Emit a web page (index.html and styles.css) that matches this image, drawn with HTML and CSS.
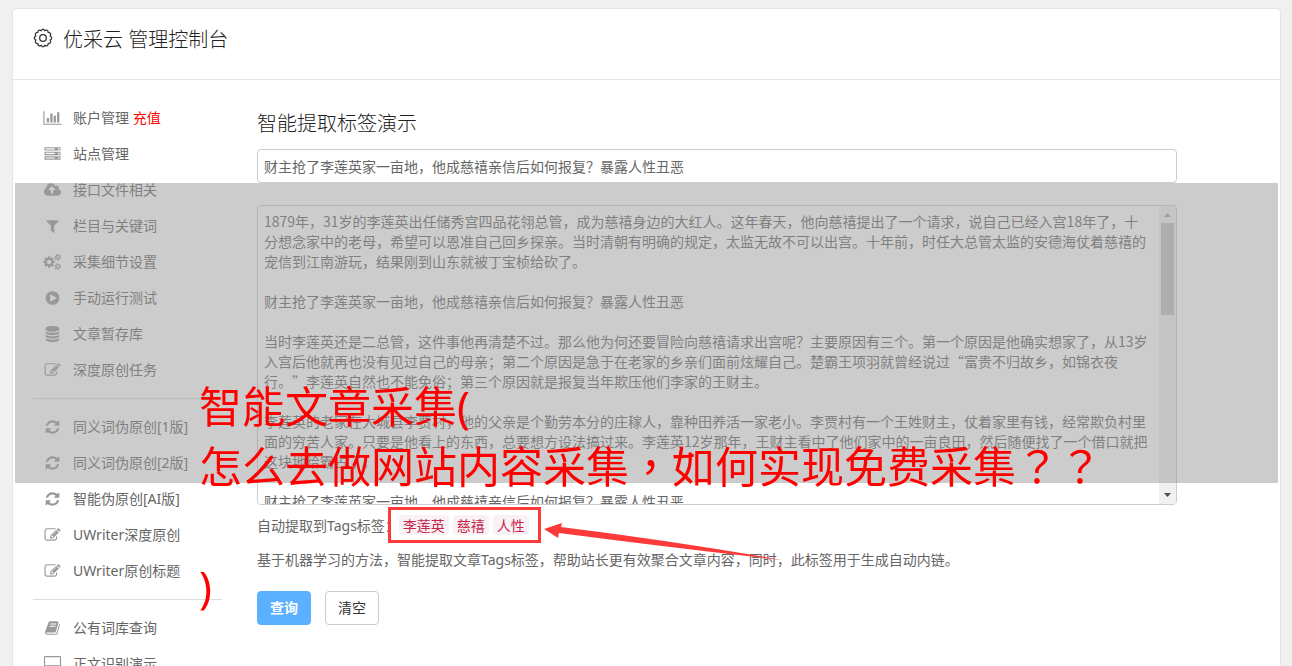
FILE: index.html
```html
<!DOCTYPE html>
<html lang="zh-CN">
<head>
    <meta charset="UTF-8">
    <meta name="viewport" content="width=device-width, initial-scale=1.0">
    <title>优采云 管理控制台</title>
    <link rel="stylesheet" href="styles.css">
</head>
<body>
    <svg class="symbols" aria-hidden="true">
        <symbol id="i-chart" viewBox="0 0 2048 1792"><path d="M640 896v512h-256v-512h256zm384-512v1024h-256v-1024h256zm1024 1152v128h-2048v-1536h128v1408h1920zm-640-896v768h-256v-768h256zm384-384v1152h-256v-1152h256z"/></symbol>
        <symbol id="i-server" viewBox="0 0 1792 1792"><path d="M128 1408h1024v-128h-1024v128zm0-512h1024v-128h-1024v128zm1568 448q0-40-28-68t-68-28-68 28-28 68 28 68 68 28 68-28 28-68zm-1568-960h1024v-128h-1024v128zm1568 448q0-40-28-68t-68-28-68 28-28 68 28 68 68 28 68-28 28-68zm0-512q0-40-28-68t-68-28-68 28-28 68 28 68 68 28 68-28 28-68zm96 832v384h-1792v-384h1792zm0-512v384h-1792v-384h1792zm0-512v384h-1792v-384h1792z"/></symbol>
        <symbol id="i-cloud" viewBox="0 0 1920 1792"><path d="M1280 864q0-14-9-23l-352-352q-9-9-23-9t-23 9l-351 351q-10 12-10 24 0 14 9 23t23 9h224v352q0 13 9.500 22.500t22.500 9.500h192q13 0 22.500-9.500t9.500-22.500v-352h224q13 0 22.500-9.500t9.500-22.500zm640 288q0 159-112.500 271.500t-271.500 112.500h-1088q-185 0-316.500-131.500t-131.500-316.500q0-130 70-240t188-165q-2-30-2-43 0-212 150-362t362-150q156 0 285.500 87t188.500 231q71-62 166-62 106 0 181 75t75 181q0 76-41 138 130 31 213.500 135.500t83.500 238.500z"/></symbol>
        <symbol id="i-filter" viewBox="0 0 1792 1792"><path d="M1595 295q17 41-14 70l-493 493v742q0 42-39 59-13 5-25 5-27 0-45-19l-256-256q-19-19-19-45v-486l-493-493q-31-29-14-70 17-39 59-39h1280q42 0 59 39z"/></symbol>
        <symbol id="i-cogs" viewBox="0 0 1920 1792">
            <path d="M832 896q0-106-75-181t-181-75-181 75-75 181 75 181 181 75 181-75 75-181zm384-91v185q0 10-7 19.500t-16 10.500l-155 24q-11 35-32 76 34 48 90 115 7 11 7 20 0 12-7 19-23 30-82.500 89.500t-78.500 59.500q-11 0-21-7l-115-90q-37 19-77 31-11 108-23 155-7 24-30 24h-186q-11 0-20-7.500t-10-17.500l-23-153q-34-10-75-31l-118 89q-7 7-20 7-11 0-21-8-144-133-144-160 0-9 7-19 10-14 41-53t47-61q-23-44-35-82l-152-24q-10-1-17-9.500t-7-19.500v-185q0-10 7-19.500t16-10.500l155-24q11-35 32-76-34-48-90-115-7-11-7-20 0-12 7-20 22-30 82-89t79-59q11 0 21 7l115 90q34-18 77-32 11-108 23-154 7-24 30-24h186q11 0 20 7.500t10 17.500l23 153q34 10 75 31l118-89q8-7 20-7 11 0 21 8 144 133 144 160 0 8-7 19-12 16-42 54t-45 60q23 48 34 82l152 23q10 2 17 10.500t7 19.500z"/>
            <g fill="none" stroke="currentColor">
                <circle cx="1536" cy="384" r="200" stroke-width="140"/>
                <circle cx="1536" cy="384" r="310" stroke-width="130" stroke-dasharray="162 162"/>
                <circle cx="1536" cy="1408" r="200" stroke-width="140"/>
                <circle cx="1536" cy="1408" r="310" stroke-width="130" stroke-dasharray="162 162"/>
            </g>
        </symbol>
        <symbol id="i-play" viewBox="0 0 1792 1792"><path d="M896 128q209 0 385.500 103t279.500 279.500 103 385.500-103 385.500-279.500 279.500-385.500 103-385.500-103-279.500-279.500-103-385.500 103-385.500 279.500-279.500 385.500-103zm384 823q32-18 32-55t-32-55l-544-320q-31-19-64-1-32 19-32 56v640q0 37 32 56 16 8 32 8 17 0 32-9z"/></symbol>
        <symbol id="i-database" viewBox="0 0 1792 1792"><path d="M896 768q237 0 443-43t325-127v170q0 69-103 128t-280 93.500-385 34.500-385-34.500-280-93.500-103-128v-170q119 84 325 127t443 43zm0 768q237 0 443-43t325-127v170q0 69-103 128t-280 93.500-385 34.500-385-34.500-280-93.500-103-128v-170q119 84 325 127t443 43zm0-384q237 0 443-43t325-127v170q0 69-103 128t-280 93.500-385 34.500-385-34.500-280-93.500-103-128v-170q119 84 325 127t443 43zm0-1152q208 0 385 34.500t280 93.500 103 128v128q0 69-103 128t-280 93.500-385 34.500-385-34.500-280-93.500-103-128v-128q0-69 103-128t280-93.500 385-34.500z"/></symbol>
        <symbol id="i-edit" viewBox="0 0 1792 1792"><path d="M888 1184l116-116-152-152-116 116v56h96v96h56zm440-720q-16-16-33 1l-350 350q-17 17-1 33t33-1l350-350q17-17 1-33zm80 594v190q0 119-84.500 203.500t-203.500 84.500h-832q-119 0-203.500-84.500t-84.500-203.500v-832q0-119 84.500-203.500t203.500-84.500h832q63 0 117 25 15 7 18 23 3 17-9 29l-49 49q-14 14-32 8-23-6-45-6h-832q-66 0-113 47t-47 113v832q0 66 47 113t113 47h832q66 0 113-47t47-113v-126q0-13 9-22l64-64q15-15 35-7t20 29zm-96-738l288 288-672 672h-288v-288zm444 132l-92 92-288-288 92-92q28-28 68-28t68 28l152 152q28 28 28 68t-28 68z"/></symbol>
        <symbol id="i-refresh" viewBox="0 0 1792 1792"><path d="M1639 1056q0 5-1 7-64 268-268 434.500t-478 166.500q-146 0-282.500-55t-243.500-157l-129 129q-19 19-45 19t-45-19-19-45v-448q0-26 19-45t45-19h448q26 0 45 19t19 45-19 45l-137 137q71 66 161 102t187 36q134 0 250-65t186-179q11-17 53-117 8-23 30-23h192q13 0 22.500 9.500t9.500 22.500zm25-800v448q0 26-19 45t-45 19h-448q-26 0-45-19t-19-45 19-45l138-138q-148-137-349-137-134 0-250 65t-186 179q-11 17-53 117-8 23-30 23h-199q-13 0-22.500-9.500t-9.500-22.500v-7q65-268 270-434.500t480-166.500q146 0 284 55.500t245 156.500l130-129q19-19 45-19t45 19 19 45z"/></symbol>
        <symbol id="i-book" viewBox="0 0 1792 1792"><path d="M1703 478q40 57 18 129l-275 906q-19 64-76.500 107.500t-122.500 43.500h-923q-77 0-148.500-53.500t-99.500-131.500q-24-67-2-127 0-4 3-27t4-37q1-8-3-21.500t-3-19.500q2-11 8-21t16.500-23.500 16.500-23.500q23-38 45-91.500t30-91.500q3-10 .5-30t-.5-28q3-11 17-28t17-23q21-36 42-92t25-90q1-9-2.500-32t.5-28q4-13 22-30.500t22-22.500q19-26 42.500-84.500t27.500-96.500q1-8-3-25.500t-2-26.500q2-8 9-18t18-23 17-21q8-12 16.500-30.500t15-35 16-36 19.500-32 26.500-23.500 36-11.500 47.500 5.500l-1 3q38-9 51-9h761q74 0 114 56t18 130l-274 906q-36 119-71.500 153.500t-128.500 34.500h-869q-27 0-38 15-11 16-1 43 24 70 144 70h923q29 0 56-15.500t35-41.500l300-987q7-22 5-57 38 15 59 43zm-1064 2q-4 13 2 22.500t20 9.500h608q13 0 25.500-9.500t16.500-22.500l21-64q4-13-2-22.500t-20-9.500h-608q-13 0-25.500 9.500t-16.500 22.500zm-83 256q-4 13 2 22.500t20 9.500h608q13 0 25.500-9.500t16.500-22.500l21-64q4-13-2-22.500t-20-9.500h-608q-13 0-25.500 9.500t-16.500 22.500z"/></symbol>
        <symbol id="i-desktop" viewBox="0 0 1920 1792"><path fill-rule="evenodd" d="M160 0h1600q160 0 160 160v1090q0 160-160 160h-560q0 120 80 254h-640q80-134 80-254h-560q-160 0-160-160v-1090q0-160 160-160zm0 128q-32 0-32 32v832q0 32 32 32h1600q32 0 32-32v-832q0-32-32-32z"/></symbol>
    </svg>

    <div class="panel">
        <div class="panel-header">
            <svg class="gear" viewBox="0 0 20 20" aria-hidden="true">
                <path d="M8.300 2.600Q10-.4 11.700 2.600Q14.900 1 15.200 4.400Q18.800 4.700 17.200 8Q20.300 10 17.200 12Q18.800 15.300 15.200 15.600Q14.900 19 11.700 17.400Q10 20.400 8.300 17.400Q5.100 19 4.800 15.600Q1.200 15.300 2.800 12Q-.3 10 2.800 8Q1.200 4.700 4.800 4.400Q5.100 1 8.300 2.600Z"/>
                <circle cx="10" cy="10" r="3.300"/>
            </svg>
            <h1>优采云 管理控制台</h1>
        </div>

        <div class="panel-body">
            <ul class="menu">
                <li><a href="#"><svg><use href="#i-chart"/></svg>账户管理 <span class="pay">充值</span></a></li>
                <li><a href="#"><svg><use href="#i-server"/></svg>站点管理</a></li>
                <li><a href="#"><svg><use href="#i-cloud"/></svg>接口文件相关</a></li>
                <li><a href="#"><svg><use href="#i-filter"/></svg>栏目与关键词</a></li>
                <li><a href="#"><svg><use href="#i-cogs"/></svg>采集细节设置</a></li>
                <li><a href="#"><svg><use href="#i-play"/></svg>手动运行测试</a></li>
                <li><a href="#"><svg><use href="#i-database"/></svg>文章暂存库</a></li>
                <li><a href="#"><svg><use href="#i-edit"/></svg>深度原创任务</a></li>
                <li class="divider"></li>
                <li><a href="#"><svg><use href="#i-refresh"/></svg>同义词伪原创[1版]</a></li>
                <li><a href="#"><svg><use href="#i-refresh"/></svg>同义词伪原创[2版]</a></li>
                <li><a href="#"><svg><use href="#i-refresh"/></svg>智能伪原创[AI版]</a></li>
                <li><a href="#"><svg><use href="#i-edit"/></svg>UWriter深度原创</a></li>
                <li><a href="#"><svg><use href="#i-edit"/></svg>UWriter原创标题</a></li>
                <li class="divider"></li>
                <li><a href="#"><svg><use href="#i-book"/></svg>公有词库查询</a></li>
                <li><a href="#"><svg><use href="#i-desktop"/></svg>正文识别演示</a></li>
            </ul>

            <form class="demo">
                <h2>智能提取标签演示</h2>
                <input type="text" class="field" aria-label="标题" value="财主抢了李莲英家一亩地，他成慈禧亲信后如何报复？暴露人性丑恶">
                <div class="article">
                    <textarea class="field" aria-label="正文">
1879年，31岁的李莲英出任储秀宫四品花翎总管，成为慈禧身边的大红人。这年春天，他向慈禧提出了一个请求，说自己已经入宫18年了，十分想念家中的老母，希望可以恩准自己回乡探亲。当时清朝有明确的规定，太监无故不可以出宫。十年前，时任大总管太监的安德海仗着慈禧的宠信到江南游玩，结果刚到山东就被丁宝桢给砍了。

财主抢了李莲英家一亩地，他成慈禧亲信后如何报复？暴露人性丑恶

当时李莲英还是二总管，这件事他再清楚不过。那么他为何还要冒险向慈禧请求出宫呢？主要原因有三个。第一个原因是他确实想家了，从13岁入宫后他就再也没有见过自己的母亲；第二个原因是急于在老家的乡亲们面前炫耀自己。楚霸王项羽就曾经说过“富贵不归故乡，如锦衣夜行。”李莲英自然也不能免俗；第三个原因就是报复当年欺压他们李家的王财主。

李莲英的老家在大城县李贾村，他的父亲是个勤劳本分的庄稼人，靠种田养活一家老小。李贾村有一个王姓财主，仗着家里有钱，经常欺负村里面的穷苦人家。只要是他看上的东西，总要想方设法搞过来。李莲英12岁那年，王财主看中了他们家中的一亩良田，然后随便找了一个借口就把这块地给霸占了。

财主抢了李莲英家一亩地，他成慈禧亲信后如何报复？暴露人性丑恶
</textarea>
                    <div class="scrollbar" aria-hidden="true">
                        <svg viewBox="0 0 17 17"><path d="M5 11l3.500-4 3.500 4z"/></svg>
                        <div class="thumb"></div>
                        <svg class="down" viewBox="0 0 17 17"><path d="M5 6l3.500 4 3.500-4z"/></svg>
                    </div>
                </div>
                <div class="result">自动提取到Tags标签：<span class="tags"><code>李莲英</code><code>慈禧</code><code>人性</code><svg class="arrow" viewBox="0 0 240 40" aria-hidden="true"><path d="M0 8L18 2L17 6Q130 20 238 39Q130 27 15 12L14 17Z"/></svg></span></div>
                <p class="hint">基于机器学习的方法，智能提取文章Tags标签，帮助站长更有效聚合文章内容，同时，此标签用于生成自动内链。</p>
                <div class="buttons">
                    <button type="button" class="btn primary">查询</button>
                    <button type="reset" class="btn">清空</button>
                </div>
            </form>
        </div>

        <div class="mask"></div>
        <div class="caption" lang="zh-TW">智能文章采集(<br>怎么去做网站内容采集，如何实现免费采集？？<br><br>)</div>
    </div>
</body>
</html>
```

FILE: styles.css
```css
* {
    box-sizing: border-box;
}

html {
    scrollbar-width: none;
}

body {
    margin: 0;
    padding: 8px 11px 20px 12px;
    background: #f0f0f0;
    color: #666;
    font-family: "Noto Sans", "Noto Sans CJK SC", sans-serif;
    font-size: 14px;
    line-height: 20px;
    text-spacing-trim: space-all;
}

h1, h2 {
    margin: 0;
    color: #222;
    font-size: 20px;
    font-weight: 300;
    line-height: 24px;
}

.symbols {
    display: none;
}

.panel {
    position: relative;
    border: 1px solid #e4e4e4;
    border-radius: 4px;
    background: #fff;
}

.panel-header {
    display: flex;
    gap: 10px;
    padding: 19px 20px 27px;
    border-bottom: 1px solid #e4e4e4;
}

.gear {
    width: 20px;
    height: 20px;
    fill: none;
    stroke: #333;
    stroke-width: 1.3;
}

.panel-body {
    display: grid;
    grid-template-columns: 189px 1fr;
    gap: 35px;
    padding: 20px 103px 20px 20px;
}

/* left menu */
.menu {
    margin: 0;
    padding: 0;
    list-style: none;
}

.menu a {
    display: flex;
    align-items: center;
    height: 36px;
    padding-left: 10px;
    color: #666;
    white-space: pre;
    text-decoration: none;
}

.menu svg {
    width: 19px;
    height: 16px;
    margin-right: 11px;
    color: #999;
    fill: #999;
}

.menu .pay {
    color: #f00;
}

.divider {
    height: 1px;
    margin: 10px 0;
    background: #ddd;
}

/* tag demo */
.demo {
    padding-top: 12px;
}

.field {
    display: block;
    width: 100%;
    padding: 5px 6px;
    border: 1px solid #ccc;
    border-radius: 4px;
    background: #fff;
    color: #666;
    font: inherit;
    text-spacing-trim: inherit;
}

input.field {
    height: 34px;
    margin: 13px 0 22px;
}

.article {
    position: relative;
}

textarea.field {
    height: 300px;
    padding-right: 28px;
    overflow-y: auto;
    resize: none;
    scrollbar-width: none;
    font-family: "Noto Sans CJK SC", sans-serif;
}

.scrollbar {
    position: absolute;
    top: 1px;
    right: 1px;
    bottom: 1px;
    display: flex;
    flex-direction: column;
    width: 17px;
    border-radius: 0 3px 3px 0;
    background: #f1f1f1;
}

.scrollbar svg {
    height: 17px;
    fill: #a3a3a3;
}

.scrollbar .down {
    margin-top: auto;
    fill: #505050;
}

.thumb {
    height: 92px;
    margin: 0 2px;
    background: #c1c1c1;
}

.result {
    margin-top: 10px;
}

.tags {
    position: relative;
    display: inline-flex;
    gap: 4px;
}

/* red marker round the tags */
.tags::after {
    content: "";
    position: absolute;
    inset: -8px -12px -8px -11px;
    border: 3px solid #fc3a3a;
}

.tags code {
    padding: 0 4px;
    border-radius: 4px;
    background: #f9f2f4;
    color: #c7254e;
    font-family: "Noto Sans CJK SC", sans-serif;
    font-size: 14px;
}

.arrow {
    position: absolute;
    left: 100%;
    top: 6px;
    width: 240px;
    height: 40px;
    margin-left: 15px;
    fill: #fc3a3a;
}

.hint {
    margin: 14px 0 21px;
}

.buttons {
    display: flex;
    gap: 14px;
}

.btn {
    width: 54px;
    height: 34px;
    padding: 0;
    border: 1px solid #ccc;
    border-radius: 4px;
    background: #fff;
    color: #333;
    font: inherit;
}

.btn.primary {
    border-color: #5bb0ff;
    background: #5bb0ff;
    color: #fff;
    font-weight: 700;
}

/* grey band and the big title over the page */
.mask {
    position: absolute;
    left: 2px;
    right: 2px;
    top: 174px;
    height: 300px;
    background: #999;
    opacity: 0.5;
    pointer-events: none;
}

.caption {
    position: absolute;
    left: 186px;
    top: 368px;
    color: #f00;
    font-family: "Noto Sans", "Noto Sans CJK TC", sans-serif;
    font-size: 43px;
    font-weight: 400;
    line-height: 60px;
    pointer-events: none;
}
```
